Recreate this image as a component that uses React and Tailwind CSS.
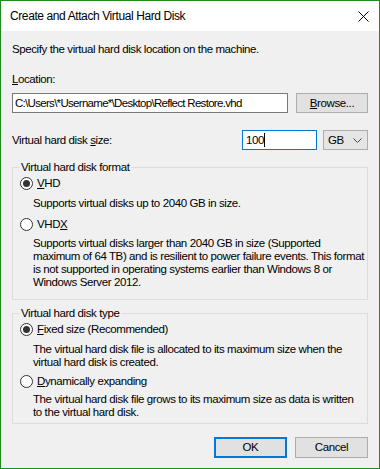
const Radio = ({ checked }) => {
  return (
    <span className="w-[13px] h-[13px] rounded-full border border-[#333] bg-white flex items-center justify-center shrink-0">
      {checked && <span className="w-[7px] h-[7px] rounded-full bg-[#333]" />}
    </span>
  );
};

const Option = ({ checked, children }) => {
  return (
    <div className="flex items-center gap-[4px] h-[16px] ml-[7px]">
      <Radio checked={checked} />
      <span>{children}</span>
    </div>
  );
};

const Group = ({ title, children }) => {
  return (
    <fieldset className="border border-[#dcdcdc] mx-0">
      <legend className="ml-[6px] px-[2px] leading-[15px]">{title}</legend>
      {children}
    </fieldset>
  );
};

const App = () => {
  return (
    <div
      className="w-[380px] h-[469px] border border-[#1f8b1f] flex flex-col text-[11.5px] tracking-[-0.4px] leading-[15px] text-black bg-[#f0f0f0]"
      style={{ fontFamily: '"Liberation Sans", Arial, sans-serif' }}
    >
      <div className="h-[30px] bg-white flex items-center justify-between pl-[9px] pr-[10px] shrink-0">
        <span className="pt-[1px] text-[12px]">Create and Attach Virtual Hard Disk</span>
        <svg width="11" height="11" viewBox="0 0 11 11" className="mt-[1px]">
          <path d="M0.5 0.5 L10.5 10.5 M10.5 0.5 L0.5 10.5" stroke="#000" strokeWidth="1" fill="none" />
        </svg>
      </div>

      <div className="flex flex-col px-[11px] pt-[11px]">
        <p>Specify the virtual hard disk location on the machine.</p>

        <p className="mt-[15px]">
          <span className="underline">L</span>ocation:
        </p>
        <div className="flex gap-[8px] mt-[6px]">
          <div className="w-[276px] h-[20px] bg-white border border-[#7a7a7a] flex items-center pl-[2px] tracking-[-0.7px]">
            C:\Users\*Username*\Desktop\Reflect Restore.vhd
          </div>
          <div className="flex-1 h-[20px] bg-[#e1e1e1] border border-[#adadad] flex items-center justify-center">
            <span>
              <span className="underline">B</span>rowse...
            </span>
          </div>
        </div>

        <div className="flex items-center mt-[17px] h-[20px]">
          <span className="flex-1">
            Virtual hard disk <span className="underline">s</span>ize:
          </span>
          <div className="w-[75px] h-[20px] bg-white border border-[#0078d7] flex items-center pl-[3px]">
            100<span className="w-[1px] h-[14px] bg-black" />
          </div>
          <div className="w-[45px] ml-[6px] h-[20px] bg-[#e5e5e5] border border-[#adadad] flex items-center justify-between pl-[4px] pr-[5px]">
            <span>GB</span>
            <svg width="9" height="5" viewBox="0 0 9 5">
              <path d="M0.5 0.5 L4.5 4.5 L8.5 0.5" stroke="#444" strokeWidth="1" fill="none" />
            </svg>
          </div>
        </div>

        <div className="mt-[10px]">
          <Group title="Virtual hard disk format">
            <Option checked>
              <span className="underline">V</span>HD
            </Option>
            <p className="ml-[20px] mt-[6px] leading-[13px]">Supports virtual disks up to 2040 GB in size.</p>
            <div className="mt-[6px]">
              <Option>
                VHD<span className="underline">X</span>
              </Option>
            </div>
            <p className="ml-[20px] mr-[1px] mt-[5px] leading-[13px] pb-[10px]">
              Supports virtual disks larger than 2040 GB in size (Supported maximum of 64 TB) and is resilient to power
              failure events. This format is not supported in operating systems earlier than Windows 8 or Windows Server
              2012.
            </p>
          </Group>
        </div>

        <div className="mt-[6px]">
          <Group title="Virtual hard disk type">
            <Option checked>
              <span className="underline">F</span>ixed size (Recommended)
            </Option>
            <p className="ml-[20px] mr-[6px] mt-[6px] leading-[13px]">
              The virtual hard disk file is allocated to its maximum size when the virtual hard disk is created.
            </p>
            <div className="mt-[4px]">
              <Option>
                <span className="underline">D</span>ynamically expanding
              </Option>
            </div>
            <p className="ml-[20px] mr-[6px] mt-[4px] leading-[13px] pb-[4px]">
              The virtual hard disk file grows to its maximum size as data is written to the virtual hard disk.
            </p>
          </Group>
        </div>

        <div className="flex justify-end gap-[8px] mt-[13px]">
          <div className="w-[73px] h-[21px] bg-[#e1e1e1] border-2 border-[#0078d7] flex items-center justify-center">
            OK
          </div>
          <div className="w-[73px] h-[21px] bg-[#e1e1e1] border border-[#adadad] flex items-center justify-center">
            Cancel
          </div>
        </div>
      </div>
    </div>
  );
};

export default App;
